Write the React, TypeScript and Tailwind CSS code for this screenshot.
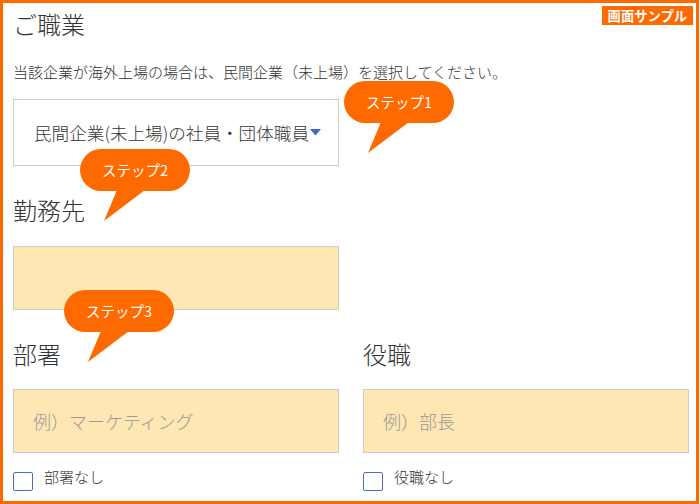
import React from 'react';

const FONT = "font-['Noto_Sans_CJK_JP','Noto_Sans',sans-serif]";

interface BubbleProps {
    label: string;
    className: string;
}

// Orange speech bubble with a tail pointing down-left
const StepBubble: React.FC<BubbleProps> = ({ label, className }) => (
    <div className={`absolute w-[110px] h-[42px] ${className}`}>
        <div className="w-full h-full rounded-full bg-[#ff6a00] flex items-center justify-center text-white text-[14.5px] leading-none">
            {label}
        </div>
        <svg className="absolute left-0 top-[41px]" width="110" height="32" viewBox="0 0 110 32">
            <polygon points="37,0 65,0 24,31" fill="#ff6a00" />
        </svg>
    </div>
);

const Checkbox: React.FC<{ label: string }> = ({ label }) => (
    <label className="flex items-start gap-[11px] mt-[19px]">
        <span className="w-[20px] h-[19px] border-[1.5px] border-[#4b6dc5] rounded-[2px] bg-white"></span>
        <span className="-mt-[3px] text-[15px] leading-[15px] text-[#333] font-light">{label}</span>
    </label>
);

const App: React.FC = () => {
    return (
        <div className={`${FONT} w-[700px] h-[504px] bg-white`}>
            <div className="relative w-[699px] h-[504px] border-[3px] border-[#ff6a00] pl-[10px] pr-[7px] pt-[9px]">
                <div className="absolute right-[3px] top-[3px] h-[19px] px-[6px] bg-[#ff6a00] text-white font-bold text-[13.3px] leading-[19px]">
                    画面サンプル
                </div>

                <h2 className="text-[24px] leading-[24px] text-[#333] font-light">ご職業</h2>
                <p className="mt-[28px] text-[15px] leading-[15px] text-[#333] font-light">
                    当該企業が海外上場の場合は、民間企業（未上場）を選択してください。
                </p>

                <div className="mt-[20px] w-[326px] h-[67px] border border-[#ccc] bg-white flex items-center pl-[20px]">
                    <span className="text-[17.6px] text-[#333] leading-none font-light">民間企業(未上場)の社員・団体職員</span>
                    <svg className="ml-[1px]" width="11" height="7" viewBox="0 0 11 7">
                        <polygon points="0,0 11,0 5.5,6.5" fill="#3b6ac7" />
                    </svg>
                </div>

                <h2 className="mt-[32px] text-[24px] leading-[24px] text-[#333] font-light">勤務先</h2>
                <div className="mt-[24px] w-[326px] h-[64px] border border-[#ccc] bg-[#fee7b3]"></div>

                <div className="mt-[32px] grid grid-cols-2 gap-x-[24px]">
                    <div>
                        <h2 className="text-[24px] leading-[24px] text-[#333] font-light">部署</h2>
                        <div className="mt-[23px] h-[64px] border border-[#ccc] bg-[#fee7b3] flex items-center pl-[19px]">
                            <span className="text-[18px] leading-none text-[#999] font-light">例）マーケティング</span>
                        </div>
                        <Checkbox label="部署なし" />
                    </div>
                    <div>
                        <h2 className="text-[24px] leading-[24px] text-[#333] font-light">役職</h2>
                        <div className="mt-[23px] h-[64px] border border-[#ccc] bg-[#fee7b3] flex items-center pl-[19px]">
                            <span className="text-[18px] leading-none text-[#999] font-light">例）部長</span>
                        </div>
                        <Checkbox label="役職なし" />
                    </div>
                </div>

                <StepBubble label="ステップ1" className="left-[341px] top-[78px]" />
                <StepBubble label="ステップ2" className="left-[77px] top-[146px]" />
                <StepBubble label="ステップ3" className="left-[61px] top-[287px]" />
            </div>
        </div>
    );
};

export default App;
